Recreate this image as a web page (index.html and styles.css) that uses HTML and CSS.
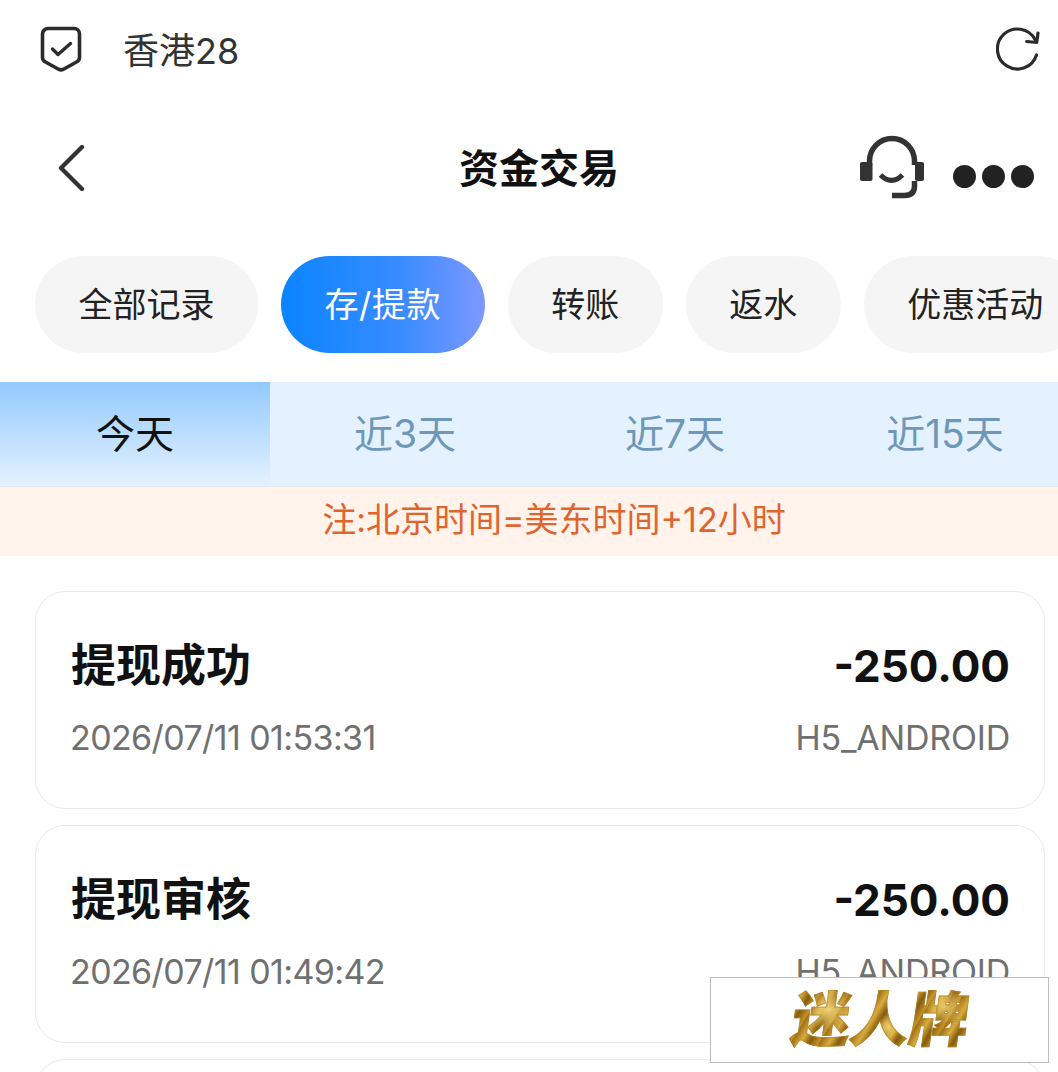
FILE: index.html
```html
<!DOCTYPE html>
<html lang="zh-CN">
<head>
<meta charset="utf-8">
<title>资金交易</title>
<link rel="stylesheet" href="styles.css">
</head>
<body>
<div class="app">
  <div class="browser-bar">
    <svg class="shield" viewBox="0 0 42 46" fill="none">
      <path d="M8 2.500h26a5.500 5.500 0 0 1 5.500 5.500v23.500q0 3-3 4.500l-13 7.200q-2.500 1.300-5 0l-13-7.200q-3-1.500-3-4.500v-23.500a5.500 5.500 0 0 1 5.500-5.500z" stroke="#2b2b2b" stroke-width="3.600"/>
      <path d="M12.500 23l5.500 5.500 12.500-11" stroke="#2b2b2b" stroke-width="3.400" stroke-linecap="round" stroke-linejoin="round"/>
    </svg>
    <span class="site-name">香港28</span>
    <svg class="reload" viewBox="0 0 44 44" fill="none">
      <path d="M40.500 28a20 20 0 1 1-1.500-15.500" stroke="#2b2b2b" stroke-width="3.200" stroke-linecap="round"/>
      <path d="M42 6l-1.300 9.500-10-1" stroke="#2b2b2b" stroke-width="3.200" stroke-linecap="round" stroke-linejoin="round"/>
    </svg>
  </div>

  <header class="nav">
    <svg class="back" viewBox="0 0 28 48" fill="none">
      <path d="M25 3L4 24l21 21" stroke="#333" stroke-width="4.400" stroke-linecap="round" stroke-linejoin="round"/>
    </svg>
    <h1 class="nav-title">资金交易</h1>
    <div class="nav-actions">
      <svg class="service" viewBox="0 0 66 66" fill="none">
        <path d="M10.500 30v-4a22.500 22.500 0 0 1 45 0v4" stroke="#333" stroke-width="5.500"/>
        <rect x="1" y="27" width="12.500" height="19" rx="2" fill="#333"/>
        <rect x="56" y="27" width="9" height="19" rx="2" fill="#333"/>
        <path d="M21.500 40q11 11 22 0" stroke="#333" stroke-width="5"/>
        <path d="M55.500 46v5q0 9.500-10 9.500H33" stroke="#333" stroke-width="5.500"/>
      </svg>
      <div class="dots"><i></i><i></i><i></i></div>
    </div>
  </header>

  <nav class="chips">
    <a class="chip">全部记录</a>
    <a class="chip active">存/提款</a>
    <a class="chip">转账</a>
    <a class="chip">返水</a>
    <a class="chip">优惠活动</a>
  </nav>

  <div class="tabs">
    <a class="tab current">今天</a>
    <a class="tab">近3天</a>
    <a class="tab">近7天</a>
    <a class="tab">近15天</a>
  </div>

  <p class="notice">注:北京时间=美东时间+12小时</p>

  <section class="records">
    <article class="record">
      <div class="line"><strong class="state">提现成功</strong><strong class="amount">-250.00</strong></div>
      <div class="line"><span class="meta stamp">2026/07/11 01:53:31</span><span class="meta device">H5_ANDROID</span></div>
    </article>
    <article class="record">
      <div class="line"><strong class="state">提现审核</strong><strong class="amount">-250.00</strong></div>
      <div class="line"><span class="meta stamp">2026/07/11 01:49:42</span><span class="meta device">H5_ANDROID</span></div>
    </article>
    <article class="record"></article>
  </section>

  <div class="brand"><span class="brand-text">迷人牌</span></div>
</div>
</body>
</html>
```
FILE: styles.css
```css
* { box-sizing: border-box; }

html, body {
  margin: 0;
  height: 100%;
  overflow: hidden;
  background: #fff;
}

body {
  font-family: "Inter", "Noto Sans CJK SC", sans-serif;
  color: #111;
}

.app {
  position: relative;
  width: 1058px;
  height: 1072px;
  overflow: hidden;
}

/* Browser strip */
.browser-bar {
  display: flex;
  align-items: center;
  height: 100px;
  padding: 0 18px 2px 40px;
}

.shield { width: 42px; height: 46px; }

.site-name {
  margin: 0 0 2px 41px;
  font-size: 36px;
  color: #333;
}

.reload { width: 44px; height: 44px; margin-left: auto; }

/* Page header */
.nav {
  position: relative;
  display: flex;
  align-items: center;
  justify-content: space-between;
  height: 135px;
  padding: 0 24px 0 57px;
}

.back { width: 28px; height: 48px; }

.nav-title {
  position: absolute;
  left: 20px;
  right: 0;
  margin: 0;
  padding-bottom: 4px;
  text-align: center;
  font-size: 40px;
  font-weight: 700;
  color: #111;
}

.nav-actions {
  display: flex;
  align-items: center;
  gap: 28px;
}

.service { width: 66px; height: 66px; }

.dots { display: flex; gap: 6px; margin-top: 17px; }

.dots i {
  width: 23px;
  height: 23px;
  border-radius: 50%;
  background: #222;
}

/* Category chips */
.chips {
  display: flex;
  gap: 23px;
  height: 97px;
  margin-top: 21px;
  padding-left: 35px;
}

.chip {
  flex: none;
  display: flex;
  align-items: center;
  padding: 0 43.500px 5px;
  border-radius: 49px;
  background: #f5f5f5;
  font-size: 34px;
  color: #222;
}

.chip.active {
  background: linear-gradient(90deg, #0a84ff 0%, #3a8cff 60%, #7e98ff 100%);
  color: #fff;
  letter-spacing: 0.6px;
}

/* Date range */
.tabs {
  display: flex;
  height: 104px;
  margin-top: 29px;
  background: #e4f2ff;
}

.tab {
  flex: none;
  width: 270px;
  display: flex;
  align-items: center;
  justify-content: center;
  padding-bottom: 7px;
  font-size: 39px;
  color: #6f97b7;
}

.tab.current {
  background: linear-gradient(180deg, #93c9fd 0%, #e4f2ff 100%);
  color: #111;
}

.notice {
  margin: 0;
  height: 70px;
  padding-left: 50px;
  line-height: 66px;
  text-align: center;
  font-size: 34px;
  color: #de652c;
  background: #fff3ec;
  border-top: 1.500px solid #e6e6e6;
}

/* Transaction cards */
.records {
  display: flex;
  flex-direction: column;
  gap: 16px;
  padding: 35px 13px 0 35px;
}

.record {
  flex: none;
  height: 218px;
  padding: 41px 34px 0 35px;
  border: 1.500px solid #e9e9e9;
  border-radius: 30px;
}

.line {
  display: flex;
  align-items: center;
  justify-content: space-between;
}

.line + .line { margin-top: 14px; }

.state { font-size: 45px; font-weight: 700; color: #111; line-height: 66px; }
.amount { font-size: 44px; font-weight: 700; color: #111; }
.meta { font-size: 34px; color: #707070; line-height: 50px; }
.stamp { letter-spacing: -0.6px; margin-left: -1px; }
.device { letter-spacing: -0.2px; }

/* Maker's stamp over the lower corner */
.brand {
  position: absolute;
  left: 710px;
  top: 977px;
  width: 339px;
  height: 86px;
  display: flex;
  align-items: center;
  justify-content: center;
  background: #fff;
  border: 1px solid #bdbdbd;
}

.brand-text {
  font-size: 59px;
  font-weight: 900;
  line-height: 70px;
  transform: translateX(1px) skewX(-8deg);
  background:
    radial-gradient(circle at 20% 35%, #f3d679 0, transparent 14%),
    radial-gradient(circle at 55% 60%, #f1cf6c 0, transparent 12%),
    radial-gradient(circle at 85% 30%, #eccb68 0, transparent 12%),
    repeating-linear-gradient(115deg, #9c6c14 0, #d9ad3f 9px, #855a0e 17px, #c9982e 26px);
  -webkit-background-clip: text;
  background-clip: text;
  color: transparent;
  -webkit-text-stroke: 1px rgba(176, 128, 32, 0.55);
}
```
